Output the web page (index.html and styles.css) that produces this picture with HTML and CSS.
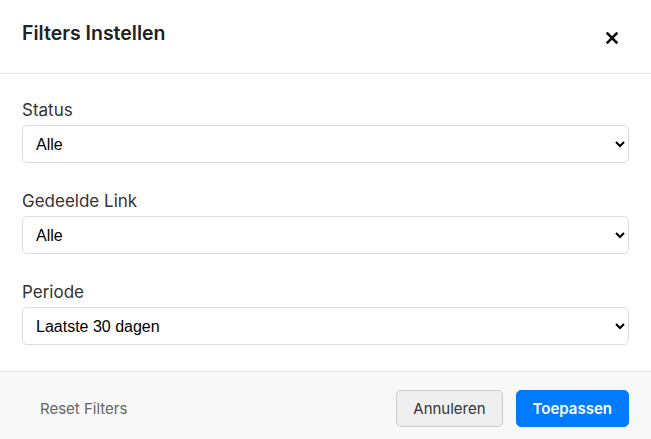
FILE: index.html
```html
<!DOCTYPE html>
<html lang="nl">
<head>
<meta charset="utf-8">
<title>Filters Instellen</title>
<link rel="stylesheet" href="styles.css">
</head>
<body>
<div class="modal">
  <div class="modal-header">
    <h2 class="modal-title">Filters Instellen</h2>
    <button class="close-btn" aria-label="Sluiten">
      <svg width="12" height="12" viewBox="0 0 12 12"><path d="M1.5 1.5 L10.5 10.5 M10.5 1.5 L1.5 10.5" stroke="#111" stroke-width="2.6" stroke-linecap="square" fill="none"/></svg>
    </button>
  </div>
  <div class="modal-body">
    <div class="form-group">
      <label class="form-label" for="status">Status</label>
      <select id="status" class="form-select">
        <option>Alle</option>
        <option>Actief</option>
        <option>Inactief</option>
      </select>
    </div>
    <div class="form-group">
      <label class="form-label" for="link">Gedeelde Link</label>
      <select id="link" class="form-select">
        <option>Alle</option>
      </select>
    </div>
    <div class="form-group">
      <label class="form-label" for="periode">Periode</label>
      <select id="periode" class="form-select">
        <option>Laatste 30 dagen</option>
        <option>Laatste 7 dagen</option>
      </select>
    </div>
  </div>
  <div class="modal-footer">
    <button class="btn btn-link">Reset Filters</button>
    <div class="footer-actions">
      <button class="btn btn-secondary">Annuleren</button>
      <button class="btn btn-primary">Toepassen</button>
    </div>
  </div>
</div>
</body>
</html>
```

FILE: styles.css
```css
* { box-sizing: border-box; }
html, body { margin: 0; padding: 0; background: #fff; }
body { font-family: Inter, "Noto Sans", sans-serif; color: #333; }

.modal { width: 651px; background: #fff; }

.modal-header {
  height: 74px;
  padding: 0 22px;
  display: flex;
  align-items: center;
  justify-content: space-between;
  border-bottom: 1px solid #e5e5e5;
}
.modal-title {
  margin: 0;
  font-size: 19.5px;
  font-weight: 600;
  color: #222;
  line-height: 1;
  margin-top: -5px;
}
.close-btn {
  background: none;
  border: 0;
  padding: 0;
  margin-right: 11px;
  margin-top: 2px;
  width: 12px;
  height: 12px;
  display: flex;
  cursor: pointer;
}

.modal-body {
  padding: 26px 22px 26px;
  display: flex;
  flex-direction: column;
  gap: 28px;
}
.form-group { display: flex; flex-direction: column; }
.form-label {
  font-size: 17px;
  color: #333;
  line-height: 21px;
  margin-bottom: 4px;
}
.form-select {
  width: 100%;
  height: 38px;
  border: 1px solid #ddd;
  border-radius: 5px;
  background: #fff;
  padding: 0 9px;
  font-family: "Liberation Sans", Arial, sans-serif;
  font-size: 16px;
  color: #000;
}

.modal-footer {
  background: #f8f8f8;
  border-top: 1px solid #e5e5e5;
  padding: 18px 22px;
  display: flex;
  align-items: center;
  justify-content: space-between;
}
.footer-actions { display: flex; gap: 13px; }
.btn {
  font-family: Inter, "Noto Sans", sans-serif;
  font-size: 15px;
  height: 37px;
  padding: 0 16px;
  border-radius: 5px;
  cursor: pointer;
}
.btn-link {
  background: none;
  border: 0;
  color: #666;
  padding: 0 18px;
}
.btn-secondary {
  background: #efefef;
  border: 1px solid #ccc;
  color: #333;
}
.btn-primary {
  background: #007bff;
  border: 1px solid #007bff;
  color: #fff;
  font-weight: 600;
  padding: 0 16px;
}
```
